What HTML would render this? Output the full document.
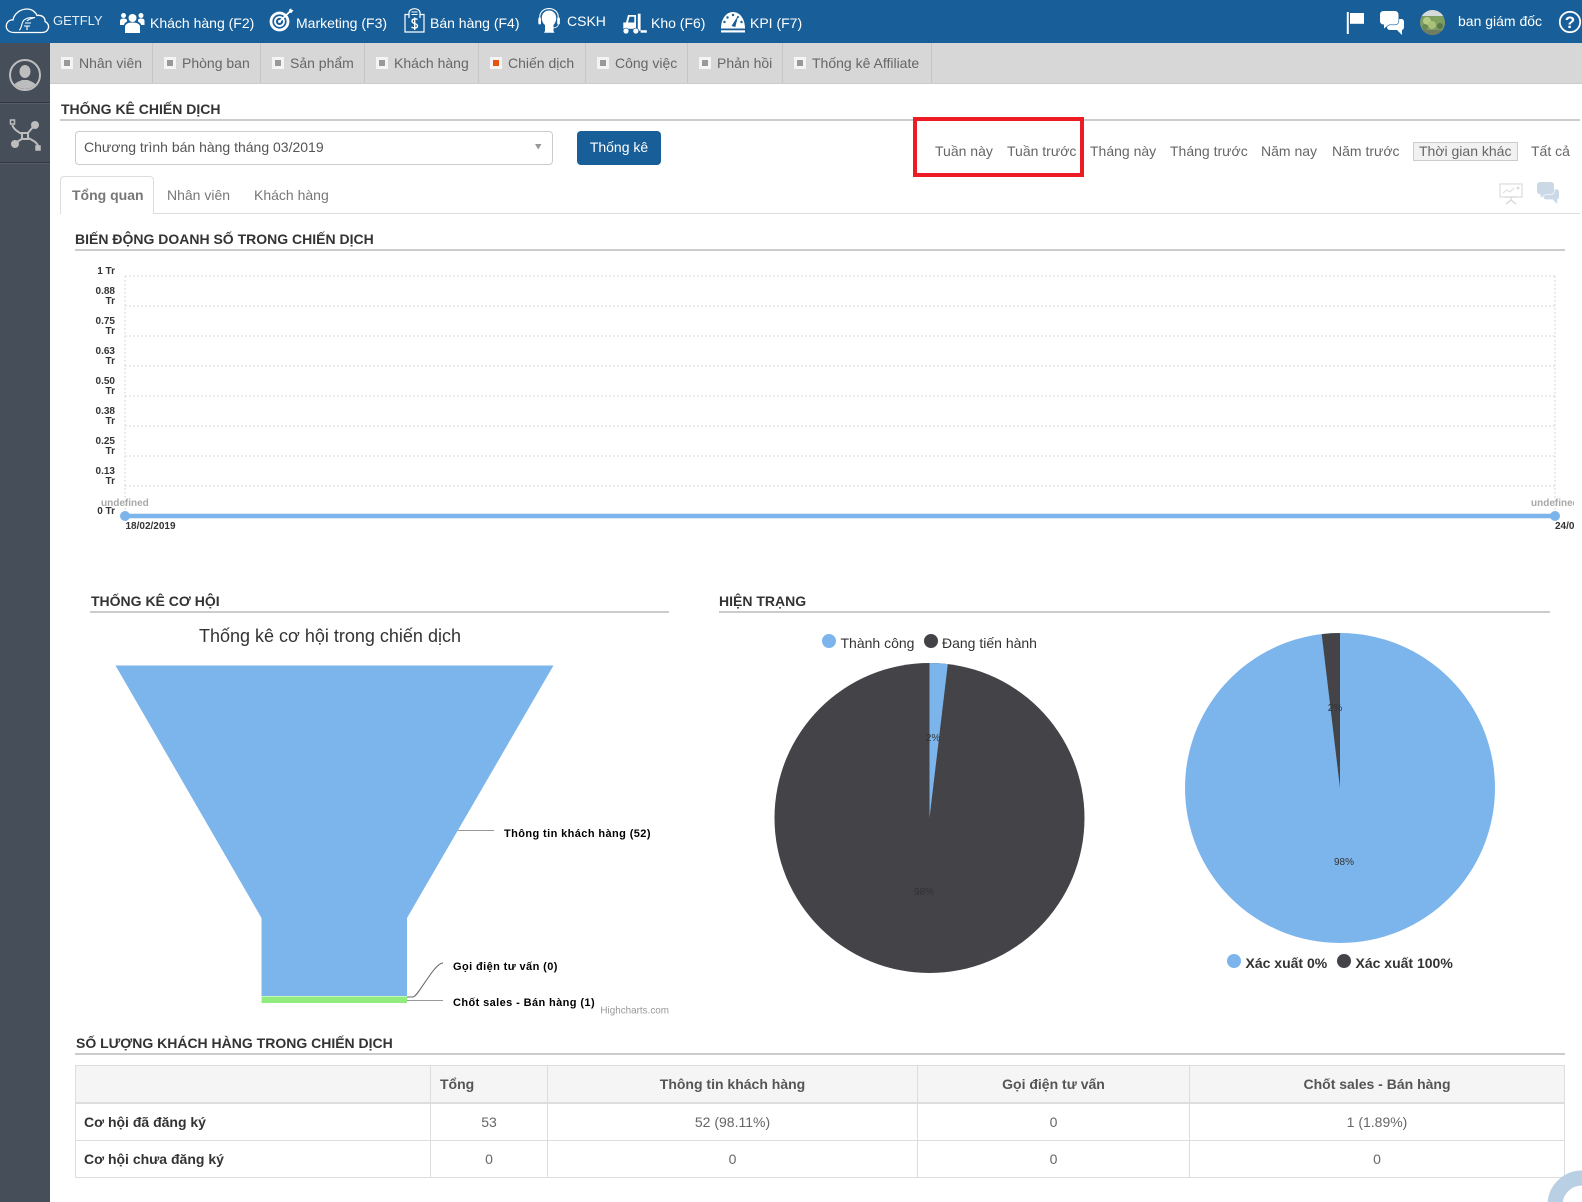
<!DOCTYPE html>
<html lang="vi">
<head>
<meta charset="utf-8">
<title>Thống kê chiến dịch</title>
<style>
html,body{margin:0;padding:0;background:#fff}
body{width:1582px;height:1202px;overflow:hidden;position:relative;font-family:"Liberation Sans",Arial,sans-serif;font-size:14px;color:#666}
.a{position:absolute}
.t{position:absolute;white-space:nowrap;line-height:20px;height:20px}
.h{color:#fff}
.line{position:absolute;height:2px;background:#ccc}
.sec{position:absolute;white-space:nowrap;line-height:20px;font-weight:bold;color:#333;font-size:14px}
.sep{position:absolute;top:43px;width:1px;height:40px;background:#c6c6c6}
.sq{position:absolute;top:57px;width:12px;height:12px;background:#f4f4f4}
.sq:after{content:"";position:absolute;left:3px;top:3px;width:6px;height:6px;background:#999}
.sq.on:after{background:#e8520e}
.v{position:absolute;background:#ddd;width:1px;top:1065px;height:113px}
.hz{position:absolute;background:#ddd;left:75px;width:1490px;height:1px}
.c{position:absolute;text-align:center;white-space:nowrap;line-height:20px}
svg{position:absolute;overflow:visible}
</style>
</head>
<body>
<!-- header -->
<div class="a" style="left:0;top:0;width:1582px;height:43px;background:#185f99"></div>
<svg style="left:0;top:0" width="60" height="43" viewBox="0 0 60 43"><path d="M14 32.500C8 32.500 5.500 28.500 6.500 24.500C7.500 21 10.500 19.500 13 20C14 14 20 9 27 9C32 9 35.500 12 37 15.500C42 14.500 45.500 18 45 21.500C48 23 49.500 26 48 29C47 31.500 44.500 32.500 42 32.500Z" fill="none" stroke="#fff" stroke-width="1.300"/><path d="M19 30C22 29 21 23 24 20C27 17.500 31 17.500 35 17.500C31 18.500 28 19.500 27 21M24 26H30M25 23H31M27 26V30" fill="none" stroke="#fff" stroke-width="1.100"/></svg>
<div class="t h" style="left:53px;top:11px;font-size:13px;color:#e6eef5">GETFLY</div>
<svg style="left:120px;top:12px" width="25" height="21" viewBox="0 0 25 21" fill="#fff"><circle cx="12.500" cy="6" r="4"/><path d="M5 21V15C5 12 8 10.500 12.500 10.500C17 10.500 20 12 20 15V21Z"/><circle cx="3.500" cy="3.500" r="2.500"/><circle cx="21" cy="3.500" r="2.500"/><path d="M0 13V9C0 7 2 6.500 3.500 6.500C5.500 6.500 7 7 7 8.500L7 9.500C5 10.500 4 12 4 13Z"/><path d="M24.500 13V9C24.500 7 23 6.500 21 6.500C19 6.500 18 7 18 8.500L18 9.500C20 10.500 21 12 21 13Z"/></svg>
<div class="t h" style="left:150px;top:13px">Khách hàng (F2)</div>
<svg style="left:270px;top:8px" width="26" height="25" viewBox="0 0 26 25" fill="none" stroke="#fff"><circle cx="9.500" cy="13.500" r="8.500" stroke-width="2.800"/><circle cx="9.500" cy="13.500" r="4.500" stroke-width="1.800"/><circle cx="9.500" cy="13.500" r="1.500" fill="#fff" stroke="none"/><path d="M9.500 13.500L20.500 3" stroke-width="1.600"/><path d="M18.500 4.500L19.500 1L21.500 .5L21.500 2L23.500 2L21.500 5Z" fill="#fff" stroke="none"/></svg>
<div class="t h" style="left:296px;top:13px">Marketing (F3)</div>
<svg style="left:404px;top:8px" width="22" height="25" viewBox="0 0 22 25" fill="none" stroke="#fff" stroke-width="1.200"><path d="M5 6.500H1V24H20V6.500H16"/><path d="M5 10V5C5 2.500 7.500 .7 10.500 .7C13.500 .7 16 2.500 16 5V10"/><path d="M7.500 4H13.500M7.500 6.500H13.500" stroke-width="1"/><path d="M13.500 11.500C12.500 10.500 8 10.500 8 13.200C8 16 13.500 15 13.500 18C13.500 20.500 9 20.500 7.500 19M10.700 9.500V22" stroke-width="1.400"/></svg>
<div class="t h" style="left:430px;top:13px">Bán hàng (F4)</div>
<svg style="left:538px;top:8px" width="24" height="26" viewBox="0 0 24 26" fill="#fff"><path d="M11 2.500C7 2.500 3.800 5.500 3.800 10C3.800 13 5 15.500 7 17V22.500C7 23.500 6 24.700 6 24.700H16.500C16.500 24.700 15.500 23.500 15.500 22.500V17C17 15.500 18.200 13 18.200 10C18.200 5.500 15 2.500 11 2.500Z"/><path d="M1.800 11V9C1.800 3.800 6 .6 11 .6C16 .6 20.200 3.800 20.200 9V11" fill="none" stroke="#fff" stroke-width="1.100"/><rect x="0.300" y="9.500" width="2.700" height="7" rx="1.200"/><rect x="19.200" y="9.500" width="2.700" height="7" rx="1.200"/><path d="M20.500 16C20 19 18 20 14 20" fill="none" stroke="#fff" stroke-width=".8"/></svg>
<div class="t h" style="left:567px;top:11px">CSKH</div>
<svg style="left:622px;top:12px" width="26" height="22" viewBox="0 0 26 22" fill="#fff"><path d="M1.300 10.500H4L6 3H14V16.700H1.300Z M7.500 4.800L6 10.500H12.300V4.800Z" fill-rule="evenodd"/><rect x="15.800" y="1.700" width="2.800" height="17"/><rect x="18.600" y="18.200" width="6.200" height="2.500"/><circle cx="4" cy="19" r="2.900" stroke="#185f99" stroke-width=".6"/><circle cx="13.800" cy="19" r="2.900" stroke="#185f99" stroke-width=".6"/></svg>
<div class="t h" style="left:651px;top:13px">Kho (F6)</div>
<svg style="left:720px;top:9px" width="28" height="25" viewBox="0 0 28 25"><path d="M1 19.500C1 10 6 3 13 3C20 3 25 10 25 19.500Z" fill="#fff"/><g fill="#185f99"><circle cx="13" cy="6" r="1.200"/><circle cx="7.500" cy="8.500" r="1.200"/><circle cx="18" cy="8" r="1"/><circle cx="4.500" cy="13" r="1.200"/><circle cx="21.500" cy="13" r="1.200"/><path d="M11.500 17L18.300 6.300L15.300 18Z"/></g><rect x="1" y="21.300" width="24" height="2.200" fill="#fff"/></svg>
<div class="t h" style="left:750px;top:13px">KPI (F7)</div>

<svg style="left:1346px;top:12px" width="20" height="23" viewBox="0 0 20 23" fill="#fff"><rect x=".8" y="0" width="2" height="22"/><rect x="4" y="1" width="14" height="10.800"/></svg>
<svg style="left:1380px;top:11px" width="25" height="24" viewBox="0 0 25 24"><path d="M10 8H21.500C23 8 24 9.300 24 11V16C24 17.500 23.200 18.800 22 19V24L17 19H10C8 19 7 17.500 7 16V11C7 9.300 8 8 10 8Z" fill="#fff"/><path d="M3.500 0H15C17 0 18.500 1.500 18.500 3.500V10C18.500 12 17 13.500 15 13.500H9L4 17.500V13.500H3.500C1.500 13.500 0 12 0 10V3.500C0 1.500 1.500 0 3.500 0Z" fill="#fff" stroke="#185f99" stroke-width="1.300" paint-order="stroke"/></svg>
<svg style="left:1420px;top:10px" width="25" height="25" viewBox="0 0 25 25"><defs><clipPath id="av"><circle cx="12.500" cy="12.500" r="12.500"/></clipPath></defs><g clip-path="url(#av)"><rect width="25" height="25" fill="#7f9c64"/><rect width="25" height="6" fill="#d5dada"/><circle cx="7" cy="11" r="4" fill="#b6cb85"/><circle cx="17" cy="10" r="4" fill="#7fa25e"/><circle cx="12" cy="15" r="4" fill="#a9c178"/><circle cx="20" cy="16" r="3" fill="#5c7a48"/><circle cx="5" cy="17" r="3" fill="#6a8a52"/><rect y="20" width="25" height="5" fill="#6f7d64"/></g></svg>
<div class="t h" style="left:1458px;top:11px">ban giám đốc</div>
<svg style="left:1558px;top:10px" width="24" height="24" viewBox="0 0 24 24"><circle cx="12" cy="12" r="10.200" fill="none" stroke="#fff" stroke-width="1.800"/><text x="12" y="18" text-anchor="middle" font-family="Liberation Sans" font-size="17" font-weight="bold" fill="#fff">?</text></svg>

<!-- sidebar -->
<div class="a" style="left:0;top:43px;width:50px;height:1159px;background:#464e5a"></div>
<div class="a" style="left:0;top:102px;width:50px;height:1px;background:#33383f"></div>
<div class="a" style="left:0;top:103px;width:50px;height:1px;background:#555d69"></div>
<div class="a" style="left:0;top:162px;width:50px;height:1px;background:#33383f"></div>
<div class="a" style="left:0;top:163px;width:50px;height:1px;background:#555d69"></div>
<svg style="left:9px;top:59px" width="32" height="32" viewBox="0 0 32 32"><defs><clipPath id="sa"><circle cx="16" cy="16" r="14"/></clipPath></defs><circle cx="16" cy="16" r="15" fill="none" stroke="#bdbdbd" stroke-width="2"/><g clip-path="url(#sa)" fill="#bdbdbd"><ellipse cx="16" cy="12.500" rx="5.500" ry="6.500"/><path d="M4 30C4 24 9 23 13 21H19C23 23 28 24 28 30Z"/></g></svg>
<svg style="left:9px;top:118px" width="33" height="35" viewBox="0 0 33 35" fill="none" stroke="#bdbdbd" stroke-width="2"><rect x="1.500" y="2" width="4" height="4" stroke-width="1.500"/><rect x="13" y="15" width="6" height="6" stroke-width="2"/><rect x="27" y="28" width="4" height="4" stroke-width="1.500" fill="#bdbdbd"/><path d="M3.500 7C4 11 9 14 13 16M19 20C23 22 28 24 29 28M18.500 15.500L24 9M13.500 20.500L8 24"/><circle cx="26" cy="7" r="4" fill="#bdbdbd" stroke="none"/><circle cx="6" cy="26" r="4" fill="#bdbdbd" stroke="none"/></svg>

<!-- sub nav -->
<div class="a" style="left:50px;top:43px;width:1532px;height:40px;background:#d7d7d7"></div>
<div class="a" style="left:50px;top:83px;width:1532px;height:1px;background:#cbcbcb"></div>
<div class="sep" style="left:152px"></div><div class="sep" style="left:260px"></div><div class="sep" style="left:364px"></div><div class="sep" style="left:478px"></div><div class="sep" style="left:585px"></div><div class="sep" style="left:687px"></div><div class="sep" style="left:782px"></div><div class="sep" style="left:931px"></div>
<div class="sq" style="left:61px"></div><div class="t" style="left:79px;top:53px">Nhân viên</div>
<div class="sq" style="left:164px"></div><div class="t" style="left:182px;top:53px">Phòng ban</div>
<div class="sq" style="left:272px"></div><div class="t" style="left:290px;top:53px">Sản phẩm</div>
<div class="sq" style="left:376px"></div><div class="t" style="left:394px;top:53px">Khách hàng</div>
<div class="sq on" style="left:490px"></div><div class="t" style="left:508px;top:53px">Chiến dịch</div>
<div class="sq" style="left:597px"></div><div class="t" style="left:615px;top:53px">Công việc</div>
<div class="sq" style="left:699px"></div><div class="t" style="left:717px;top:53px">Phản hồi</div>
<div class="sq" style="left:794px"></div><div class="t" style="left:812px;top:53px">Thống kê Affiliate</div>

<!-- page heading -->
<div class="sec" style="left:61px;top:99px">THỐNG KÊ CHIẾN DỊCH</div>
<div class="line" style="left:60px;top:119px;width:1520px"></div>
<div class="a" style="left:75px;top:131px;width:476px;height:32px;border:1px solid #ccc;border-radius:4px;background:#fff"></div>
<div class="t" style="left:84px;top:137px;color:#555">Chương trình bán hàng tháng 03/2019</div>
<svg style="left:535px;top:144px" width="8" height="7"><path d="M0 0H6.500L3.200 5.500Z" fill="#999"/></svg>
<div class="a" style="left:577px;top:131px;width:84px;height:34px;background:#185f99;border-radius:4px;color:#fff;text-align:center;line-height:32px">Thống kê</div>

<div class="t" style="left:935px;top:141px">Tuần này</div>
<div class="t" style="left:1007px;top:141px">Tuần trước</div>
<div class="t" style="left:1090px;top:141px">Tháng này</div>
<div class="t" style="left:1170px;top:141px">Tháng trước</div>
<div class="t" style="left:1261px;top:141px">Năm nay</div>
<div class="t" style="left:1332px;top:141px">Năm trước</div>
<div class="a" style="left:1413px;top:142px;width:103px;height:17px;background:#f1f1f1;border:1px solid #ccc"></div>
<div class="t" style="left:1419px;top:141px">Thời gian khác</div>
<div class="t" style="left:1531px;top:141px">Tất cả</div>
<div class="a" style="left:913px;top:117px;width:163px;height:52px;border:4px solid #ed1c24"></div>

<!-- inner tabs -->
<div class="a" style="left:60px;top:213px;width:1520px;height:1px;background:#ddd"></div>
<div class="a" style="left:60px;top:176px;width:94px;height:38px;background:#fff;border:1px solid #ddd;border-bottom:none;border-radius:4px 4px 0 0;box-sizing:border-box"></div>
<div class="t" style="left:72px;top:185px;font-weight:bold;color:#777">Tổng quan</div>
<div class="t" style="left:167px;top:185px;color:#777">Nhân viên</div>
<div class="t" style="left:254px;top:185px;color:#777">Khách hàng</div>
<svg style="left:1499px;top:183px" width="24" height="21" viewBox="0 0 24 21" fill="none" stroke="#dcdcdc"><rect x="1" y="1" width="22" height="13" stroke-width="1.200"/><path d="M4 10L8 7L11 9L15 5" stroke-width="1"/><circle cx="19" cy="5" r="1.500" fill="#dcdcdc" stroke="none"/><path d="M12 14V17M12 17L7 21M12 17L17 21M6 14H18" stroke-width="1.500"/></svg>
<svg style="left:1536px;top:182px" width="25" height="22" viewBox="0 0 25 24"><path d="M10 8H21.500C23 8 24 9.300 24 11V16C24 17.500 23.200 18.800 22 19V24L17 19H10C8 19 7 17.500 7 16V11C7 9.300 8 8 10 8Z" fill="#cbd9e6"/><path d="M3.500 0H15C17 0 18.500 1.500 18.500 3.500V10C18.500 12 17 13.500 15 13.500H9L4 17.500V13.500H3.500C1.500 13.500 0 12 0 10V3.500C0 1.500 1.500 0 3.500 0Z" fill="#cbd9e6" stroke="#fff" stroke-width="1.300" paint-order="stroke"/></svg>

<!-- line chart -->
<div class="sec" style="left:75px;top:229px">BIẾN ĐỘNG DOANH SỐ TRONG CHIẾN DỊCH</div>
<div class="line" style="left:75px;top:249px;width:1490px"></div>
<svg style="left:0;top:0;overflow:hidden" width="1574" height="540" viewBox="0 0 1574 540" font-family="Liberation Sans" font-size="10" font-weight="bold" fill="#333">
<g stroke="#ddd" stroke-width="1.500" stroke-dasharray="1.500 2.500" fill="none">
<path d="M125 276H1555M125 306H1555M125 336H1555M125 366H1555M125 396H1555M125 426H1555M125 456H1555M125 486H1555M125 276V516M1555 276V516"/>
</g>
<g text-anchor="end">
<text x="115" y="274">1 Tr</text>
<text x="115" y="294">0.88</text><text x="115" y="304">Tr</text>
<text x="115" y="324">0.75</text><text x="115" y="334">Tr</text>
<text x="115" y="354">0.63</text><text x="115" y="364">Tr</text>
<text x="115" y="384">0.50</text><text x="115" y="394">Tr</text>
<text x="115" y="414">0.38</text><text x="115" y="424">Tr</text>
<text x="115" y="444">0.25</text><text x="115" y="454">Tr</text>
<text x="115" y="474">0.13</text><text x="115" y="484">Tr</text>
<text x="115" y="514">0 Tr</text>
</g>
<text x="101" y="506" fill="#a8a8a8">undefined</text>
<text x="1531" y="506" fill="#a8a8a8">undefined</text>
<path d="M125 516H1555" stroke="#7cb5ec" stroke-width="4.500"/>
<circle cx="125" cy="516" r="5" fill="#7cb5ec"/><circle cx="1555" cy="516" r="5" fill="#7cb5ec"/>
<text x="125.500" y="529">18/02/2019</text>
<text x="1555" y="529">24/02/2019</text>
</svg>

<!-- funnel -->
<div class="sec" style="left:91px;top:591px">THỐNG KÊ CƠ HỘI</div>
<div class="line" style="left:90px;top:611px;width:579px"></div>
<svg style="left:0;top:0" width="700" height="1030" viewBox="0 0 700 1030" font-family="Liberation Sans">
<path d="M115.500 665.500H553.500L407 918V996H261.500V918Z" fill="#7cb5ec"/>
<rect x="261.500" y="996.500" width="145.500" height="6.500" fill="#90ed7d"/>
<g fill="none" stroke="#666" stroke-width="1"><path d="M458 830.500H494" stroke="#999"/><path d="M407 997H413C418 997 434 963 443 963"/><path d="M407 1000.500H443" stroke="#999"/></g>
<text x="199" y="642" font-size="18" fill="#333">Thống kê cơ hội trong chiến dịch</text>
<g font-size="11" font-weight="bold" fill="#000" letter-spacing=".4">
<text x="504" y="837">Thông tin khách hàng (52)</text>
<text x="453" y="970">Gọi điện tư vấn (0)</text>
<text x="453" y="1006">Chốt sales - Bán hàng (1)</text>
</g>
<text x="669" y="1013.500" font-size="9.900" fill="#999" text-anchor="end">Highcharts.com</text>
</svg>

<!-- status -->
<div class="sec" style="left:719px;top:591px">HIỆN TRẠNG</div>
<div class="line" style="left:719px;top:611px;width:831px"></div>
<svg style="left:0;top:0" width="1582" height="1000" viewBox="0 0 1582 1000" font-family="Liberation Sans">
<circle cx="929.500" cy="818" r="155" fill="#434348"/>
<path d="M929.500 818V663A155 155 0 0 1 947.800 664.100Z" fill="#7cb5ec"/>
<circle cx="1340" cy="788" r="155" fill="#7cb5ec"/>
<path d="M1340 788V633A155 155 0 0 0 1321.700 634.100Z" fill="#434348"/>
<g font-size="10" fill="#333" text-anchor="middle">
<text x="933" y="741">2%</text><text x="924" y="895">98%</text>
<text x="1335" y="711">2%</text><text x="1344" y="865">98%</text>
</g>
<circle cx="829" cy="641" r="7" fill="#7cb5ec"/>
<circle cx="931" cy="641" r="7" fill="#434348"/>
<circle cx="1234" cy="961" r="7" fill="#7cb5ec"/>
<circle cx="1344" cy="961" r="7" fill="#434348"/>
<g font-size="14" fill="#333">
<text x="840.500" y="648">Thành công</text>
<text x="942" y="648">Đang tiến hành</text>
<g font-weight="bold"><text x="1245.500" y="968">Xác xuất 0%</text><text x="1355.500" y="968">Xác xuất 100%</text></g>
</g>
</svg>

<!-- table -->
<div class="sec" style="left:76px;top:1033px">SỐ LƯỢNG KHÁCH HÀNG TRONG CHIẾN DỊCH</div>
<div class="line" style="left:75px;top:1053px;width:1490px"></div>
<div class="a" style="left:75px;top:1065px;width:1490px;height:37px;background:#f5f5f5"></div>
<div class="hz" style="top:1065px"></div>
<div class="hz" style="top:1102px;height:2px"></div>
<div class="hz" style="top:1140px"></div>
<div class="hz" style="top:1177px"></div>
<div class="v" style="left:75px"></div><div class="v" style="left:430px"></div><div class="v" style="left:547px"></div><div class="v" style="left:917px"></div><div class="v" style="left:1189px"></div><div class="v" style="left:1564px"></div>
<div class="t" style="left:440px;top:1074px;font-weight:bold;color:#555">Tổng</div>
<div class="c" style="left:548px;width:369px;top:1074px;font-weight:bold;color:#555">Thông tin khách hàng</div>
<div class="c" style="left:918px;width:271px;top:1074px;font-weight:bold;color:#555">Gọi điện tư vấn</div>
<div class="c" style="left:1190px;width:374px;top:1074px;font-weight:bold;color:#555">Chốt sales - Bán hàng</div>
<div class="t" style="left:84px;top:1112px;font-weight:bold;color:#333">Cơ hội đã đăng ký</div>
<div class="c" style="left:431px;width:116px;top:1112px">53</div>
<div class="c" style="left:548px;width:369px;top:1112px">52 (98.11%)</div>
<div class="c" style="left:918px;width:271px;top:1112px">0</div>
<div class="c" style="left:1190px;width:374px;top:1112px">1 (1.89%)</div>
<div class="t" style="left:84px;top:1149px;font-weight:bold;color:#333">Cơ hội chưa đăng ký</div>
<div class="c" style="left:431px;width:116px;top:1149px">0</div>
<div class="c" style="left:548px;width:369px;top:1149px">0</div>
<div class="c" style="left:918px;width:271px;top:1149px">0</div>
<div class="c" style="left:1190px;width:374px;top:1149px">0</div>

<!-- floating support -->
<div class="a" style="left:1547px;top:1170px;width:35px;height:32px;overflow:hidden"><svg style="left:0;top:0" width="35" height="32"><circle cx="35" cy="35" r="27" fill="none" stroke="#b9cfe3" stroke-width="15"/></svg></div>
</body>
</html>
